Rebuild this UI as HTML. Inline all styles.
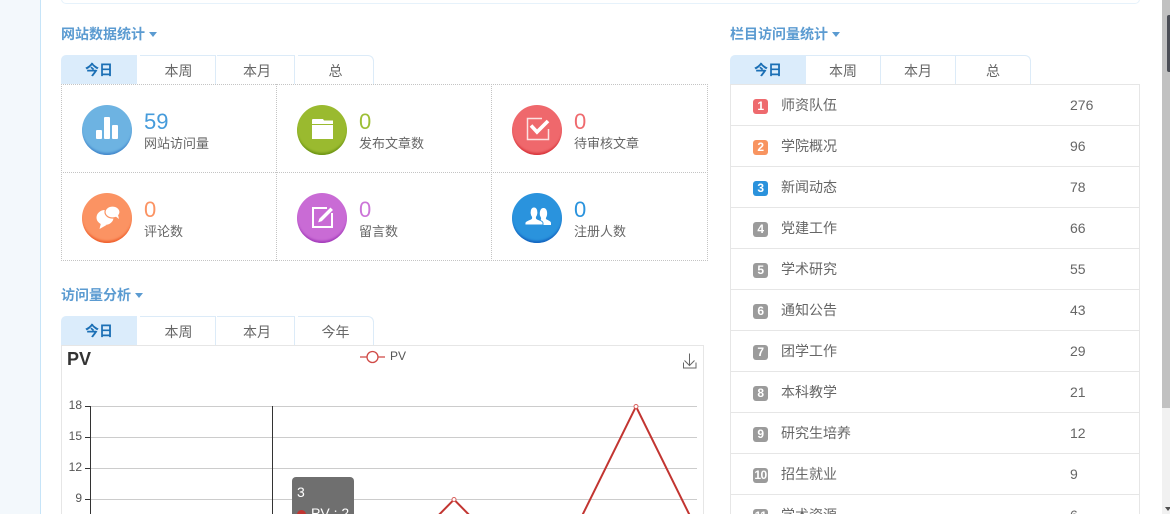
<!DOCTYPE html>
<html>
<head>
<meta charset="utf-8">
<style>
html,body{margin:0;padding:0;background:#fff;width:1170px;height:514px;overflow:hidden;}
#w{position:relative;width:1170px;height:514px;overflow:hidden;font-family:"Liberation Sans","Noto Sans CJK SC",sans-serif;color:#555;font-size:13px;}
.a{position:absolute;box-sizing:border-box;white-space:nowrap;}
.title{font-size:14px;font-weight:bold;color:#5b9bd1;line-height:18px;height:18px;}
.caret{display:inline-block;width:0;height:0;border:4px solid transparent;border-top:5px solid #5b9bd1;border-bottom:0;margin-left:4px;vertical-align:2px;}
.tab{height:29px;line-height:31px;text-align:center;font-size:14px;color:#666;border-top:1px solid #dcebf8;border-right:1px solid #dcebf8;background:#fff;}
.tab.on{background:#dbecfb;color:#1b6fb5;font-weight:bold;border:0;border-top-left-radius:5px;}
.tab.last{border-top-right-radius:6px;}
.c{width:50px;height:50px;border-radius:50%;}
.num{font-size:22px;line-height:26px;}
.lab{font-size:13px;line-height:16px;color:#666;}
.row{left:730px;width:410px;height:41px;border-bottom:1px solid #e6e6e6;border-left:1px solid #e6e6e6;border-right:1px solid #e6e6e6;}
.b{position:absolute;left:22px;top:14px;width:15px;height:15px;border-radius:3px;background:#9b9b9b;color:#fff;font-size:12px;font-weight:bold;line-height:15px;text-align:center;letter-spacing:-.5px;}
.n{position:absolute;left:50px;top:11px;line-height:18px;font-size:14px;color:#666;}
.v{position:absolute;left:339px;top:11px;line-height:18px;font-size:14px;color:#666;}
.yl{font-size:12px;color:#555;text-align:right;width:24px;left:58px;line-height:14px;}
</style>
</head>
<body>
<div id="w">
<!-- sidebar -->
<div class="a" style="left:0;top:0;width:41px;height:514px;background:#f3f8fc;border-right:1px solid #c6e4f8;"></div>
<!-- top panel -->
<div class="a" style="left:61px;top:-20px;width:1079px;height:24px;border:1px solid #e6f2fb;border-radius:5px;"></div>

<!-- Left section title -->
<div class="a title" style="left:61px;top:25px;">网站数据统计<span class="caret"></span></div>
<div class="a tab on" style="left:61px;top:55px;width:76px;">今日</div>
<div class="a tab" style="left:140px;top:55px;width:76px;padding-left:2px;">本周</div>
<div class="a tab" style="left:217px;top:55px;width:78px;padding-left:3px;">本月</div>
<div class="a tab last" style="left:298px;top:55px;width:76px;">总</div>

<!-- stats grid -->
<div class="a" style="left:61px;top:84px;width:647px;height:177px;border:1px dotted #c4c4c4;"></div>
<div class="a" style="left:276px;top:84px;width:1px;height:177px;border-left:1px dotted #c4c4c4;"></div>
<div class="a" style="left:491px;top:84px;width:1px;height:177px;border-left:1px dotted #c4c4c4;"></div>
<div class="a" style="left:61px;top:172px;width:647px;height:1px;border-top:1px dotted #c4c4c4;"></div>

<!-- stat 1 -->
<div class="a c" style="left:82px;top:105px;background:#6db3e2;box-shadow:inset 0 -3px 2px -1px #4388cc;"></div>
<svg class="a" style="left:82px;top:105px;" width="50" height="50"><rect x="14" y="25" width="6" height="9" rx="1" fill="#fff"/><rect x="22" y="12" width="6" height="22" rx="1" fill="#fff"/><rect x="30" y="20" width="6" height="14" rx="1" fill="#fff"/></svg>
<div class="a num" style="left:144px;top:109px;color:#459bdb;">59</div>
<div class="a lab" style="left:144px;top:136px;">网站访问量</div>

<!-- stat 2 -->
<div class="a c" style="left:297px;top:105px;background:#9aba2f;box-shadow:inset 0 -3px 2px -1px #6c9414;"></div>
<svg class="a" style="left:297px;top:105px;" width="50" height="50"><path d="M15 19v-4q0-1 1-1h10l1 1.500h9V19z" fill="#fff"/><rect x="15" y="20" width="21" height="14" fill="#fff"/></svg>
<div class="a num" style="left:359px;top:109px;color:#9dbf36;">0</div>
<div class="a lab" style="left:359px;top:136px;">发布文章数</div>

<!-- stat 3 -->
<div class="a c" style="left:512px;top:105px;background:#ef686c;box-shadow:inset 0 -3px 2px -1px #d8363c;"></div>
<svg class="a" style="left:512px;top:105px;" width="50" height="50"><path d="M30 13.500H15.500V34.500H36.500V24" fill="none" stroke="#fff" stroke-opacity=".8" stroke-width="1.500"/><path d="M19 20.500l6 6.500L36 16" fill="none" stroke="#fff" stroke-width="3.600"/></svg>
<div class="a num" style="left:574px;top:109px;color:#ef6a6e;">0</div>
<div class="a lab" style="left:574px;top:136px;">待审核文章</div>

<!-- stat 4 -->
<div class="a c" style="left:82px;top:193px;background:#fb9363;box-shadow:inset 0 -3px 2px -1px #ef602d;"></div>
<svg class="a" style="left:82px;top:193px;" width="50" height="50"><ellipse cx="23" cy="24.500" rx="8.500" ry="7.500" fill="#fff"/><path d="M19 30l-1.500 6 7-4z" fill="#fff"/><ellipse cx="30.500" cy="19" rx="7.500" ry="6" fill="#fff" stroke="#fb9363" stroke-width="1.200"/><path d="M33 23l4 3-1.200-5z" fill="#fff"/></svg>
<div class="a num" style="left:144px;top:197px;color:#fb9363;">0</div>
<div class="a lab" style="left:144px;top:224px;">评论数</div>

<!-- stat 5 -->
<div class="a c" style="left:297px;top:193px;background:#c96bd5;box-shadow:inset 0 -3px 2px -1px #a33cba;"></div>
<svg class="a" style="left:297px;top:193px;" width="50" height="50"><path d="M30 15H16v19h19V20" fill="none" stroke="#fff" stroke-width="2"/><path d="M20.500 30l1.500-4.500L33.500 14l3 3L25 28.500z" fill="#fff" stroke="#c96bd5" stroke-width=".8"/></svg>
<div class="a num" style="left:359px;top:197px;color:#cc75d8;">0</div>
<div class="a lab" style="left:359px;top:224px;">留言数</div>

<!-- stat 6 -->
<div class="a c" style="left:512px;top:193px;background:#2a93dd;box-shadow:inset 0 -3px 2px -1px #1363bf;"></div>
<svg class="a" style="left:512px;top:193px;" width="50" height="50"><path d="M27 32h12v-2c0-2-4-3-5-4-.4-1 .3-1.800.8-3 .8-2.500.5-8-3.300-8s-4.100 5.500-3.300 8c.5 1.200 1.200 2 .8 3z" fill="#fff"/><path d="M13 32v-2c0-2.500 5-3 6.500-4.500.5-1 0-2-.8-3-1-2.500-.8-8.500 3.300-8.500s4.300 6 3.300 8.500c-.8 1-1.300 2-.8 3 1.500 1.500 6.500 2 6.500 4.500v2z" fill="#fff" stroke="#2a93dd" stroke-width=".9"/></svg>
<div class="a num" style="left:574px;top:197px;color:#2a93dd;">0</div>
<div class="a lab" style="left:574px;top:224px;">注册人数</div>

<!-- analysis -->
<div class="a title" style="left:61px;top:286px;">访问量分析<span class="caret"></span></div>
<div class="a tab on" style="left:61px;top:316px;width:76px;">今日</div>
<div class="a tab" style="left:140px;top:316px;width:76px;padding-left:2px;">本周</div>
<div class="a tab" style="left:217px;top:316px;width:78px;padding-left:3px;">本月</div>
<div class="a tab last" style="left:298px;top:316px;width:76px;">今年</div>

<!-- chart -->
<div class="a" style="left:61px;top:345px;width:643px;height:180px;border:1px solid #e6e6e6;"></div>
<div class="a" style="left:67px;top:347px;font-size:18px;font-weight:bold;color:#333;line-height:24px;">PV</div>
<svg class="a" style="left:0;top:0;" width="1170" height="514">
  <g stroke="#ccc" stroke-width="1" shape-rendering="crispEdges">
    <line x1="90" y1="406.500" x2="697" y2="406.500"/>
    <line x1="90" y1="437.500" x2="697" y2="437.500"/>
    <line x1="90" y1="468.500" x2="697" y2="468.500"/>
    <line x1="90" y1="499.500" x2="697" y2="499.500"/>
  </g>
  <g stroke="#333" stroke-width="1" shape-rendering="crispEdges">
    <line x1="90.500" y1="406" x2="90.500" y2="514"/>
    <line x1="85" y1="406.500" x2="90" y2="406.500"/>
    <line x1="85" y1="437.500" x2="90" y2="437.500"/>
    <line x1="85" y1="468.500" x2="90" y2="468.500"/>
    <line x1="85" y1="499.500" x2="90" y2="499.500"/>
    <line x1="272.500" y1="406" x2="272.500" y2="514"/>
  </g>
  <path d="M428 526L454 499.500L480 526M577 526L636 406.500L695 526" fill="none" stroke="#c23531" stroke-width="2"/>
  <circle cx="454" cy="499.500" r="2" fill="#fff" stroke="#d9605c" stroke-width="1"/>
  <circle cx="636" cy="406.500" r="2" fill="#fff" stroke="#d9605c" stroke-width="1"/>
  <!-- legend -->
  <line x1="360" y1="357" x2="385" y2="357" stroke="#d76763" stroke-width="1.500"/>
  <circle cx="372.500" cy="357" r="5.500" fill="#fff" stroke="#d04a46" stroke-width="1.300"/>
  <!-- download -->
  <path d="M689.500 353.500v12M684.500 360.500l5 5 5-5M683.500 362.500v5.500h12.500v-5.500" fill="none" stroke="#666" stroke-width="1"/>
</svg>
<div class="a" style="left:390px;top:349px;font-size:12px;line-height:14px;color:#555;">PV</div>
<div class="a yl" style="top:398px;">18</div>
<div class="a yl" style="top:429px;">15</div>
<div class="a yl" style="top:460px;">12</div>
<div class="a yl" style="top:491px;">9</div>

<!-- tooltip -->
<div class="a" style="left:292px;top:477px;width:62px;height:60px;background:#6f6f6f;border-radius:4px;color:#fff;font-size:14px;">
  <div class="a" style="left:5px;top:7px;line-height:16px;">3</div>
  <div class="a" style="left:5px;top:33px;width:9px;height:9px;border-radius:50%;background:#c23531;"></div>
  <div class="a" style="left:19px;top:28px;line-height:16px;">PV : 2</div>
</div>

<!-- Right column -->
<div class="a title" style="left:730px;top:25px;">栏目访问量统计<span class="caret"></span></div>
<div class="a tab on" style="left:730px;top:55px;width:76px;">今日</div>
<div class="a tab" style="left:806px;top:55px;width:75px;">本周</div>
<div class="a tab" style="left:881px;top:55px;width:75px;">本月</div>
<div class="a tab last" style="left:956px;top:55px;width:75px;">总</div>

<div class="a" style="left:730px;top:84px;width:410px;height:1px;background:#e6e6e6;"></div>
<div class="a row" style="top:85px;"><span class="b" style="background:#ee6a6e;">1</span><span class="n">师资队伍</span><span class="v">276</span></div>
<div class="a row" style="top:126px;"><span class="b" style="background:#f89460;">2</span><span class="n">学院概况</span><span class="v">96</span></div>
<div class="a row" style="top:167px;"><span class="b" style="background:#2a92dc;">3</span><span class="n">新闻动态</span><span class="v">78</span></div>
<div class="a row" style="top:208px;"><span class="b">4</span><span class="n">党建工作</span><span class="v">66</span></div>
<div class="a row" style="top:249px;"><span class="b">5</span><span class="n">学术研究</span><span class="v">55</span></div>
<div class="a row" style="top:290px;"><span class="b">6</span><span class="n">通知公告</span><span class="v">43</span></div>
<div class="a row" style="top:331px;"><span class="b">7</span><span class="n">团学工作</span><span class="v">29</span></div>
<div class="a row" style="top:372px;"><span class="b">8</span><span class="n">本科教学</span><span class="v">21</span></div>
<div class="a row" style="top:413px;"><span class="b">9</span><span class="n">研究生培养</span><span class="v">12</span></div>
<div class="a row" style="top:454px;"><span class="b">10</span><span class="n">招生就业</span><span class="v">9</span></div>
<div class="a row" style="top:495px;"><span class="b">11</span><span class="n">学术资源</span><span class="v">6</span></div>

<!-- scrollbar -->
<div class="a" style="left:1162px;top:0;width:8px;height:514px;background:#f1f1f1;"></div>
<div class="a" style="left:1162px;top:0;width:8px;height:408px;background:#c1c1c1;"></div>
<div class="a" style="left:1167px;top:15px;width:3px;height:57px;background:#4a4d55;border-radius:2px 0 0 2px;"></div>
<div class="a" style="left:1165px;top:507px;width:0;height:0;border:3px solid transparent;border-top:4px solid #505050;border-bottom:0;"></div>
</div>
</body>
</html>
